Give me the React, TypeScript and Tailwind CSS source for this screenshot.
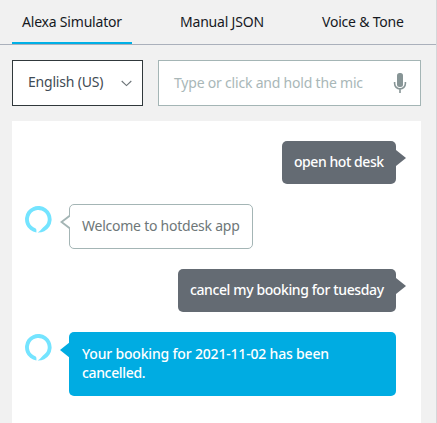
import React from "react";

function AlexaRing() {
  return (
    <svg className="mt-[2px] ml-[12.7px] h-[27px] w-[27px] shrink-0" viewBox="0 0 27 27">
      <path
        fill="#74e4ff"
        fillRule="evenodd"
        d="M11.4 26.46V24C11.4 23.2 11 22.6 10.3 22.2A9.4 9.4 0 1 1 18 21.45C16.6 23.2 14.6 25 12.6 26.58A13.3 13.3 0 1 0 11.4 26.46Z"
      />
    </svg>
  );
}

function UserBubble({ text, className }: { text: string; className: string }) {
  return (
    <div className="relative mr-[25px] flex h-[43px] items-center self-end rounded-[5px] bg-[#646b73] pb-[2px] pl-3 font-medium text-white">
      <span className={`block whitespace-nowrap ${className}`}>{text}</span>
      <svg className="absolute top-[9px] left-full h-4 w-[10px]" viewBox="0 0 10 16">
        <path d="M0 0L10 8L0 16Z" fill="#646b73" />
      </svg>
    </div>
  );
}

export default function App() {
  return (
    <div className="h-[423px] w-[437px] overflow-hidden border-r border-[#d5d6d9] bg-[#f1f1f1] font-['Noto_Sans','Open_Sans',sans-serif] text-[14px] leading-[19px] text-[#16191f]">
      <nav className="flex h-[45px] items-start border-b border-[#aab0bb] pl-3 whitespace-nowrap">
        <div className="h-[44px] w-[120px] border-b-2 border-[#00b0e6] pt-[12px] pl-[10px] tracking-[-0.2px]">
          Alexa Simulator
        </div>
        <div className="h-[44px] w-[142px] pt-[12px] pl-[48px] tracking-[-0.2px]">Manual JSON</div>
        <div className="h-[44px] pt-[12px] pl-[48px] tracking-[-0.2px]">Voice &amp; Tone</div>
      </nav>

      <div className="flex gap-[15px] pt-[15px] pl-3 whitespace-nowrap">
        <button className="flex h-[46px] w-[131px] items-center justify-between border border-[#30383b] bg-white pr-[10px] pb-[3px] pl-[15px] text-[#3f4b54]">
          <span className="tracking-[-0.2px]">English (US)</span>
          <svg className="mt-[4px] h-[7px] w-[11px]" viewBox="0 0 11 7" fill="none">
            <path d="M.7 1L5.5 5.6L10.3 1" stroke="#6c7377" strokeWidth="1.1" />
          </svg>
        </button>
        <div className="flex h-[46px] w-[263px] items-center justify-between border border-[#a4b5b5] bg-white pr-[13px] pl-[15px] text-[#a9b7b8]">
          <span className="-mt-px tracking-[-0.2px]">Type or click and hold the mic</span>
          <svg className="h-[20px] w-[14px]" viewBox="0 0 14 20" fill="none">
            <rect x="4" y="0" width="6" height="14" rx="2.5" fill="#879596" />
            <path d="M1.6 9V10.5A5.4 5.4 0 0 0 12.4 10.5V9M7 16V20" stroke="#879596" strokeWidth="1.6" />
          </svg>
        </div>
      </div>

      <main className="mt-[15px] ml-3 flex h-[302px] w-[409px] flex-col bg-white pt-5">
        <UserBubble text="open hot desk" className="w-[102px] tracking-[-0.44px]" />

        <div className="mt-5 flex">
          <AlexaRing />
          <div className="relative ml-[17.3px] flex h-[45px] w-[184px] items-center rounded-[5px] border border-[#a4b5b5] pb-[2px] pl-3 text-[#6e7778]">
            <span className="whitespace-nowrap tracking-[-0.24px]">Welcome to hotdesk app</span>
            <svg className="absolute top-[9px] -left-[10px] h-[16px] w-[10px]" viewBox="0 0 10 16">
              <path d="M10 1.5L1.5 8L10 14.5" fill="#fff" stroke="#a4b5b5" strokeWidth="1.8" />
            </svg>
          </div>
        </div>

        <div className="mt-5 flex flex-col">
          <UserBubble text="cancel my booking for tuesday" className="w-[206px] tracking-[-0.39px]" />
        </div>

        <div className="mt-5 flex">
          <AlexaRing />
          <div className="relative ml-[17.3px] h-[64px] w-[327px] rounded-[5px] bg-[#00ace2] pt-[12px] pl-[13px] font-medium whitespace-nowrap text-white">
            <div className="tracking-[-0.18px]">Your booking for 2021-11-02 has been</div>
            <div className="tracking-[-0.34px]">cancelled.</div>
            <svg className="absolute top-[10px] -left-[9px] h-4 w-[10px]" viewBox="0 0 10 16">
              <path d="M10 0L0 8L10 16Z" fill="#00ace2" />
            </svg>
          </div>
        </div>
      </main>
    </div>
  );
}
